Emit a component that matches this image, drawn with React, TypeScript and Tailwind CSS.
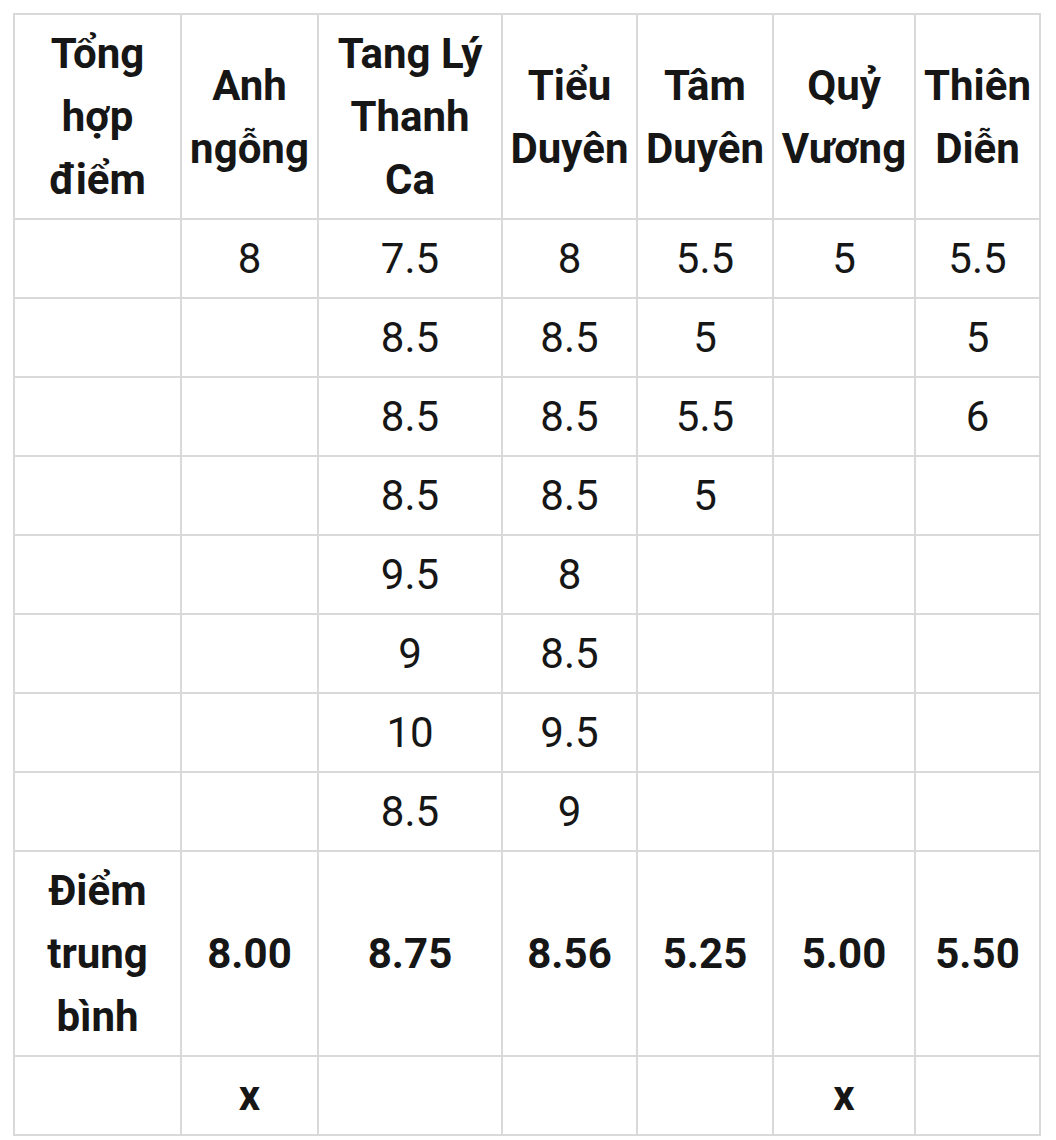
const headers = ["Tổng hợp điểm", "Anh ngỗng", "Tang Lý Thanh Ca", "Tiểu Duyên", "Tâm Duyên", "Quỷ Vương", "Thiên Diễn"];

const scores: string[][] = [
  ["", "8", "7.5", "8", "5.5", "5", "5.5"],
  ["", "", "8.5", "8.5", "5", "", "5"],
  ["", "", "8.5", "8.5", "5.5", "", "6"],
  ["", "", "8.5", "8.5", "5", "", ""],
  ["", "", "9.5", "8", "", "", ""],
  ["", "", "9", "8.5", "", "", ""],
  ["", "", "10", "9.5", "", "", ""],
  ["", "", "8.5", "9", "", "", ""],
];

const averages = ["Điểm trung bình", "8.00", "8.75", "8.56", "5.25", "5.00", "5.50"];
const marks = ["", "x", "", "", "", "x", ""];

function Cell({ text, bold }: { text: string; bold?: boolean }) {
  return (
    <div
      className={
        "bg-white flex items-center justify-center text-center px-[6px] py-[7px] text-[42px] leading-[63px] text-[#161616] " +
        (bold ? "font-bold" : "font-normal")
      }
    >
      {text}
    </div>
  );
}

export default function App() {
  return (
    <div className="min-h-[1140px] bg-white pl-[13px] pt-[13px]" style={{ fontFamily: "Roboto, 'Noto Sans', sans-serif" }}>
      <div className="grid w-[1028px] grid-cols-[165px_135px_182px_133px_134px_140px_123px] gap-[2px] bg-[#d9d9d9] p-[2px]">
        {headers.map((h, i) => <Cell key={"h" + i} text={h} bold />)}
        {scores.map((row, r) => row.map((v, i) => <Cell key={r + "-" + i} text={v} />))}
        {averages.map((v, i) => <Cell key={"a" + i} text={v} bold />)}
        {marks.map((v, i) => <Cell key={"m" + i} text={v} bold />)}
      </div>
    </div>
  );
}
